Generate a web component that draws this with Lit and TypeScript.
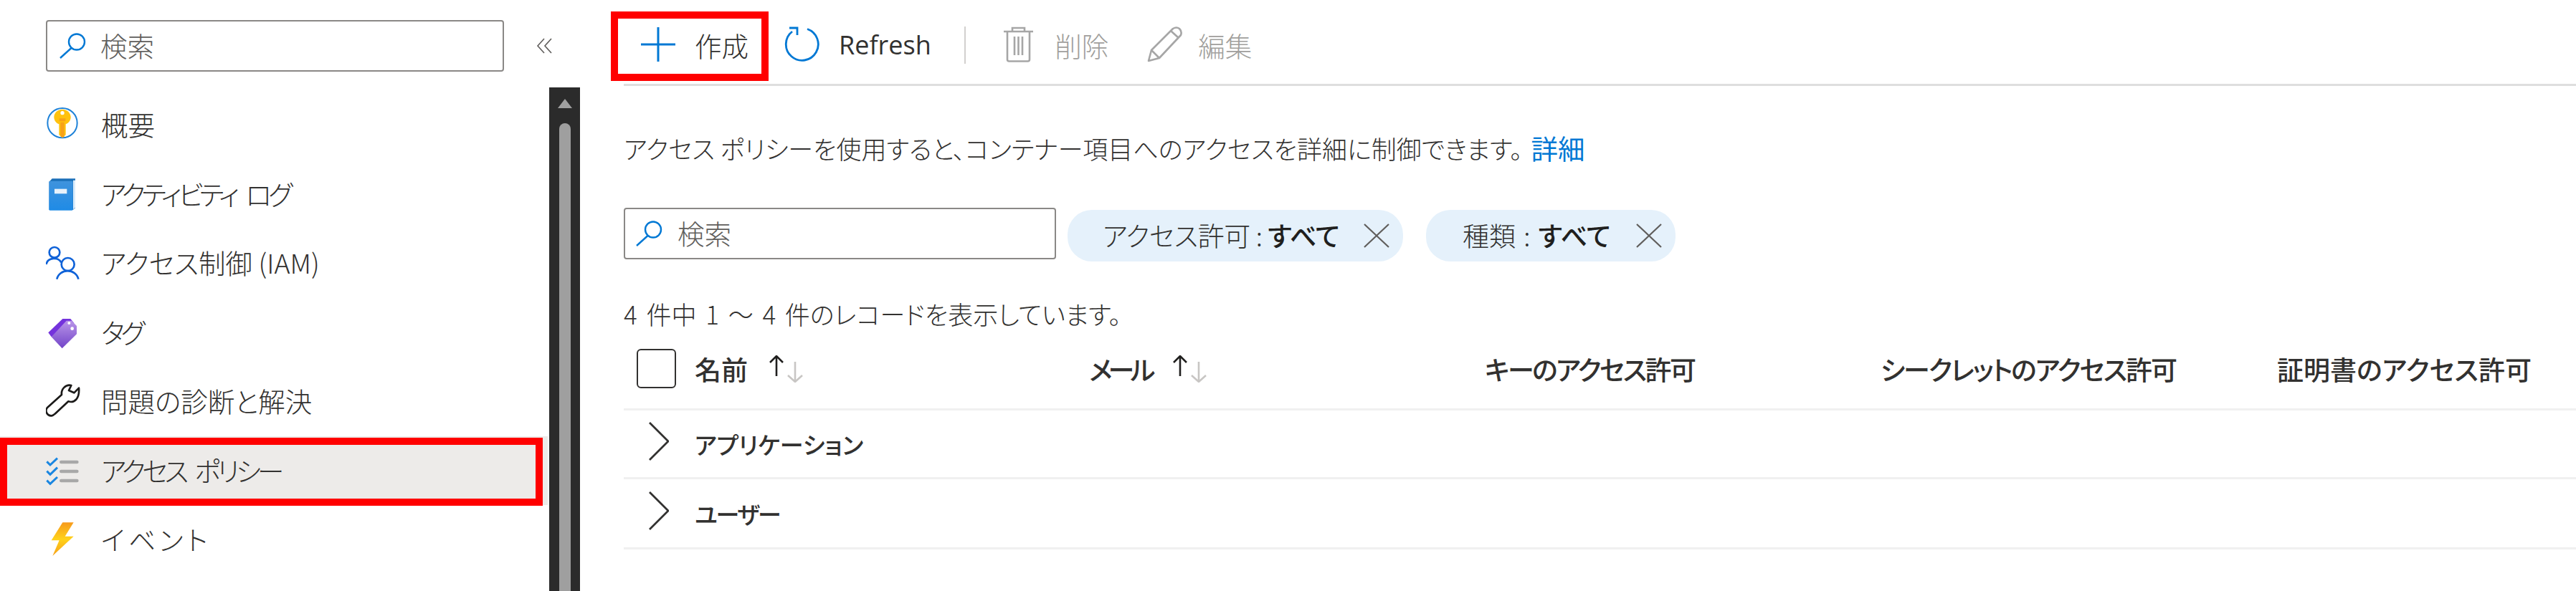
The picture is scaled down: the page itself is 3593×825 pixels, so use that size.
import { LitElement, html, css, svg } from "lit";
import { customElement } from "lit/decorators.js";
import { styleMap } from "lit/directives/style-map.js";

const box = (y: number, inner: unknown, vx = 42) =>
  html`<svg class="mi" viewBox="${vx} ${y} 144 144">${inner}</svg>`;

const searchIcon = html`<svg class="si" viewBox="0 0 37 36" fill="none" stroke="#0078d4" stroke-width="2.4"><circle cx="24" cy="12.5" r="11"/><path d="M16.500 21L1 35"/></svg>`;

const sortIcon = html`<svg class="sort" viewBox="0 0 50 38" fill="none" stroke-width="2.6"><path stroke="#201f1e" d="M12 1V29M3 10L12 1L21 10"/><path stroke="#c8c6c4" d="M38 9V37M28 28L38 37L48 28"/></svg>`;

const closeIcon = html`<svg class="x" viewBox="0 0 38 34" fill="none" stroke="#605e5c" stroke-width="2.200"><path d="M2 1L36 33M36 1L2 33"/></svg>`;

const chevron = html`<svg class="chev" viewBox="0 0 28 54" fill="none" stroke="#323130" stroke-width="2.800"><path d="M1 1L27 27L1 53"/></svg>`;

const menu = [
  {
    label: "概要",
    ls: 0,
    ws: 0,
    icon: box(30, svg`<circle cx="111" cy="95" r="62" fill="#fff" stroke="#1e82d8" stroke-width="6"/>
      <path d="M111 38C90 38 76 54 76 70C76 86 86 96 97 100V145L111 157L125 145V100C136 96 146 86 146 70C146 54 132 38 111 38Z" fill="#ffc20e"/>
      <path d="M98 76H124V88H98ZM103 92H119V152L111 157L103 150Z" fill="#f7a11a"/>
      <circle cx="111" cy="53" r="8" fill="#fff"/>`),
  },
  {
    label: "アクティビティ ログ",
    ls: -4.9,
    ws: 10,
    icon: box(318, svg`<defs><linearGradient id="bk" x1="0" y1="0" x2="0" y2="1"><stop offset="0" stop-color="#3f93dd"/><stop offset="1" stop-color="#1f8be6"/></linearGradient></defs>
      <path d="M68 325H165V448L155 456H56V338Z" fill="#1b6fb8"/>
      <path d="M156 332H165V446L156 454Z" fill="#d9ebfa"/>
      <rect x="55" y="335" width="100" height="123" rx="4" fill="url(#bk)"/>
      <rect x="78" y="368" width="52" height="20" fill="#e8f2fb"/>`),
  },
  {
    label: "アクセス制御 (IAM)",
    ls: 0,
    ws: 0,
    icon: box(612, svg`<g fill="none" stroke="#0f62d8" stroke-width="8"><circle cx="78" cy="640" r="22"/><path d="M43 690C50 660 95 658 106 682"/><circle cx="134" cy="690" r="27"/><path d="M88 752C98 706 168 706 178 752"/></g>`),
  },
  {
    label: "タグ",
    ls: -5,
    ws: 0,
    icon: box(27, svg`<defs><linearGradient id="tg" x1="0" y1="0" x2="0" y2="1"><stop offset="0" stop-color="#b995e8"/><stop offset="1" stop-color="#7244c8"/></linearGradient></defs>
      <path d="M52 100L112 42H145L160 60L65 118Z" fill="#7433dc"/>
      <path d="M65 118L110 166L171 106V72L150 50H128Z" fill="url(#tg)"/>
      <circle cx="139" cy="60" r="6" fill="#fff"/><circle cx="152" cy="83" r="7" fill="#fff"/>`),
  },
  {
    label: "問題の診断と解決",
    ls: 0,
    ws: 0,
    icon: box(327, svg`<path d="M148 333C125 328 105 348 108 372L48 426C36 440 48 462 66 460C72 459 76 456 80 452L136 400C160 408 184 390 180 344L160 364L138 354Z" fill="none" stroke="#1b1a19" stroke-width="8" stroke-linejoin="round"/>`),
  },
  {
    label: "アクセス ポリシー",
    ls: -4.6,
    ws: 9,
    selected: true,
    icon: box(612, svg`<g fill="none" stroke="#1a86e0" stroke-width="9"><path d="M46 646L60 660L90 632M46 686L60 700L90 671M46 725L60 739L90 711"/></g>
      <g stroke="#a8a8a8" stroke-width="14" stroke-linecap="round"><path d="M106 648H172M106 687H172M106 726H172"/></g>`),
  },
  {
    label: "イベント",
    ls: 5,
    ws: 0,
    icon: box(909, svg`<defs><linearGradient id="lt" x1="0" y1="0" x2="0" y2="1"><stop offset="0" stop-color="#f79a1c"/><stop offset=".5" stop-color="#ffd21a"/><stop offset="1" stop-color="#f7a11a"/></linearGradient></defs>
      <path d="M112 910H158L122 968H158L70 1050L98 985H65Z" fill="url(#lt)"/>`),
  },
];

@customElement("app-root")
export class AppRoot extends LitElement {
  static styles = css`
    :host {
      display: flex;
      width: 3593px;
      height: 825px;
      overflow: hidden;
      background: #fff;
      color: #323130;
      font-family: "Noto Sans CJK JP", "Noto Sans", sans-serif;
      font-size: 37.5px;
      font-weight: 300;
      font-feature-settings: "palt";
    }
    svg { display: block; flex: none; }
    .side { width: 809px; flex: none; display: flex; flex-direction: column; }
    .side-top { height: 122px; flex: none; padding: 28px 0 0 64px; box-sizing: border-box; display: flex; align-items: flex-start; }
    .search {
      box-sizing: border-box;
      display: flex;
      align-items: center;
      height: 72px;
      border: 2.5px solid #8a8886;
      border-radius: 4px;
      color: #605e5c;
    }
    .search span { margin-bottom: 3px; }
    .search.top { width: 639px; padding-left: 17px; gap: 20px; }
    .search.filter { width: 603px; padding-left: 15px; gap: 21px; }
    .si { width: 37px; height: 36px; }
    .collapse { width: 22px; height: 22px; margin: 25px 0 0 45px; }
    .side-body { flex: 1; display: flex; min-height: 0; }
    .menu { width: 766px; flex: none; padding-top: 4px; box-sizing: border-box; }
    .item { height: 96.5px; display: flex; align-items: center; padding-left: 64px; gap: 29px; position: relative; white-space: nowrap; }
    .item span { margin-bottom: 3px; }
    .item.sel { background: #edebe9; margin-right: 2px; }
    .mark { position: absolute; box-sizing: border-box; border: 10px solid #f00; left: 0; right: 7px; top: 2px; bottom: -1px; }
    .mi { width: 48px; height: 48px; }
    .scroll { width: 43px; flex: none; background: #2b2b2b; display: flex; flex-direction: column; align-items: center; padding: 16px 0 0 0; box-sizing: border-box; }
    .arrow { width: 0; height: 0; border: 10px solid transparent; border-top: 0; border-bottom: 13px solid #9f9f9f; margin-bottom: 21px; margin-left: 0; }
    .thumb { flex: 1; width: 16px; background: #9f9f9f; border-radius: 8px 8px 0 0; }

    .main { flex: 1; min-width: 0; padding-left: 61px; }
    .toolbar { height: 120px; box-sizing: border-box; border-bottom: 3px solid #dedede; display: flex; align-items: flex-start; padding-top: 37px; }
    .tb { display: flex; align-items: center; height: 50px; flex: none; }
    .create { position: relative; width: 220px; box-sizing: border-box; margin: 0 0 0 -18px; padding-left: 42px; gap: 27px; }
    .create svg { width: 48px; height: 48px; }
    .mark2 { position: absolute; box-sizing: border-box; border: 10px solid #f00; left: 0; right: 0; top: -21px; bottom: -26px; }
    .refresh { margin-left: 22px; gap: 26px; }
    .refresh svg { width: 50px; height: 50px; }
    .refresh span { font-family: "Open Sans", sans-serif; font-size: 36px; font-weight: 400; }
    .sep { width: 2.5px; height: 52px; background: #d2d0ce; margin-left: 46px; flex: none; }
    .off { color: #a19f9d; }
    .del { margin-left: 53px; gap: 30px; }
    .del svg { width: 41px; height: 50px; }
    .edit { margin-left: 54px; gap: 21px; }
    .edit svg { width: 50px; height: 50px; }

    .desc { margin-top: 61px; height: 50px; line-height: 50px; font-size: 35px; white-space: nowrap; }
    .desc a { color: #0078d4; text-decoration: none; margin-left: 12px; font-size: 37.5px; font-weight: 400; }
    .filters { margin-top: 59px; display: flex; align-items: flex-start; height: 75px; }
    .pill {
      margin-top: 3px;
      height: 72px;
      box-sizing: border-box;
      border-radius: 34px;
      background: #e5f1fb;
      display: flex;
      align-items: center;
      white-space: pre;
      font-size: 37px;
      flex: none;
    }
    .pill > span { margin-bottom: 3px; }
    .pill b { font-weight: 500; color: #201f1e; }
    .pill.a { margin-left: 16px; width: 468px; padding-left: 49px; letter-spacing: -0.4px; }
    .pill.b { margin-left: 32px; width: 348px; padding-left: 51px; word-spacing: 3px; }
    .pill .x { margin-left: auto; margin-right: 18px; width: 38px; height: 34px; }
    .count { margin-top: 48px; height: 50px; line-height: 50px; font-size: 35px; color: #323130; white-space: nowrap; word-spacing: 5px; }
    .head, .row {
      display: grid;
      grid-template-columns: 99px 550px 552px 552px 553px 1fr;
      align-items: center;
      box-sizing: border-box;
      border-bottom: 3px solid #f0f0f0;
    }
    .head { height: 110px; font-weight: 500; font-size: 37px; padding-bottom: 4px; }
    .row { height: 96px; font-weight: 500; font-size: 33px; }
    .row + .row { height: 98px; }
    .check { width: 55px; height: 55px; box-sizing: border-box; border: 2.5px solid #323130; border-radius: 6px; margin-left: 18px; }
    .name { display: flex; align-items: center; }
    .name .sort { width: 50px; height: 38px; margin-left: 28px; }
    .chev { width: 28px; height: 54px; margin: -8px 0 0 35px; }
    .label { white-space: nowrap; }
    .mail { letter-spacing: -5.5px; }
    .key { letter-spacing: -2.5px; }
    .secret { letter-spacing: -2px; }
    .user { letter-spacing: -2.5px; }
  `;

  render() {
    return html`
      <div class="side">
        <div class="side-top">
          <div class="search top">${searchIcon}<span>検索</span></div>
          <svg class="collapse" viewBox="0 0 22 22" fill="none" stroke="#605e5c" stroke-width="1.600"><path d="M11 1L2 11L11 21M21 1L12 11L21 21"/></svg>
        </div>
        <div class="side-body">
          <div class="menu">
            ${menu.map(
              (m) => html`<div class="item ${m.selected ? "sel" : ""}">
                ${m.icon}<span style=${styleMap({ letterSpacing: `${m.ls}px`, wordSpacing: `${m.ws}px` })}>${m.label}</span>
                ${m.selected ? html`<div class="mark"></div>` : ""}
              </div>`
            )}
          </div>
          <div class="scroll"><div class="arrow"></div><div class="thumb"></div></div>
        </div>
      </div>
      <div class="main">
        <div class="toolbar">
          <div class="tb create">
            <svg viewBox="0 0 48 48" stroke="#0078d4" stroke-width="3"><path d="M0 24H48M24 0V48"/></svg>
            <span>作成</span>
            <div class="mark2"></div>
          </div>
          <div class="tb refresh">
            <svg viewBox="0 0 50 50" fill="none" stroke="#0078d4" stroke-width="2.800"><path d="M32 3.500A22.500 22.500 0 1 1 11 7"/><path d="M7 2H18V12"/></svg>
            <span>Refresh</span>
          </div>
          <div class="sep"></div>
          <div class="tb del off">
            <svg viewBox="0 0 41 50" fill="none" stroke="#a6a6a6" stroke-width="2.600"><path d="M0 7H41M12 7V2H29V7M5 7V46Q5 48.500 7.500 48.500H33.500Q36 48.500 36 46V7M15 14V40M20.500 14V40M26 14V40"/></svg>
            <span>削除</span>
          </div>
          <div class="tb edit off">
            <svg viewBox="0 0 50 50" fill="none" stroke="#a6a6a6" stroke-width="2.600" stroke-linejoin="round"><path d="M2 48L6 33L36 3Q41 0 45 3Q49 7 47 12L17 44ZM6 33L17 44M33 6L44 16"/></svg>
            <span>編集</span>
          </div>
        </div>
        <div class="desc">アクセス ポリシーを使用すると、コンテナー項目へのアクセスを詳細に制御できます。<a>詳細</a></div>
        <div class="filters">
          <div class="search filter">${searchIcon}<span>検索</span></div>
          <div class="pill a"><span>アクセス許可 : <b>すべて</b></span>${closeIcon}</div>
          <div class="pill b"><span>種類 : <b>すべて</b></span>${closeIcon}</div>
        </div>
        <div class="count">4 件中 1 ～ 4 件のレコードを表示しています。</div>
        <div class="head">
          <div class="check"></div>
          <div class="name"><span>名前</span>${sortIcon}</div>
          <div class="name"><span class="mail">メール</span>${sortIcon}</div>
          <div class="label key">キーのアクセス許可</div>
          <div class="label secret">シークレットのアクセス許可</div>
          <div class="label">証明書のアクセス許可</div>
        </div>
        <div class="row">${chevron}<div class="label">アプリケーション</div></div>
        <div class="row">${chevron}<div class="label user">ユーザー</div></div>
      </div>
    `;
  }
}
